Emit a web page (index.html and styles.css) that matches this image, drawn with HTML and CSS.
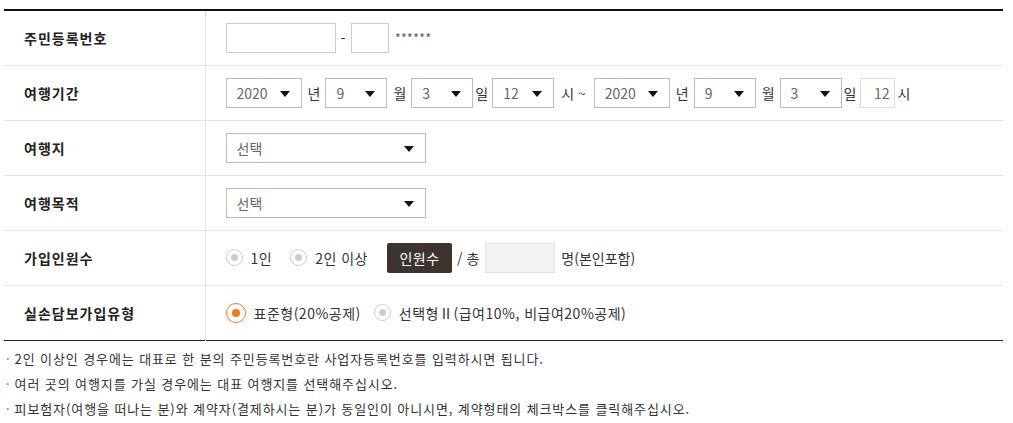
FILE: index.html
```html
<!DOCTYPE html>
<html lang="ko">
<head>
    <meta charset="UTF-8">
    <meta name="viewport" content="width=device-width, initial-scale=1.0">
    <title>여행자보험 가입</title>
    <link rel="stylesheet" href="styles.css">
</head>
<body>
    <div class="wrap">
        <table class="form-table">
            <tr>
                <th>주민등록번호</th>
                <td>
                    <div class="field">
                        <input type="text" class="inp inp-front">
                        <span class="dash">-</span>
                        <input type="text" class="inp inp-back">
                        <span class="mask">******</span>
                    </div>
                </td>
            </tr>
            <tr>
                <th>여행기간</th>
                <td>
                    <div class="field">
                        <div class="sel w76"><select><option>2020</option></select></div>
                        <span class="unit">년</span>
                        <div class="sel w62"><select><option>9</option></select></div>
                        <span class="unit">월</span>
                        <div class="sel w62"><select><option>3</option></select></div>
                        <span class="unit tight">일</span>
                        <div class="sel w62"><select><option>12</option></select></div>
                        <span class="unit wave">시 ~</span>
                        <div class="sel w76"><select><option>2020</option></select></div>
                        <span class="unit">년</span>
                        <div class="sel w62"><select><option>9</option></select></div>
                        <span class="unit">월</span>
                        <div class="sel w62"><select><option>3</option></select></div>
                        <span class="unit tight">일</span>
                        <input type="text" class="inp inp-hour" value="12">
                        <span class="unit last">시</span>
                    </div>
                </td>
            </tr>
            <tr>
                <th>여행지</th>
                <td>
                    <div class="sel w200"><select><option>선택</option></select></div>
                </td>
            </tr>
            <tr>
                <th>여행목적</th>
                <td>
                    <div class="sel w200"><select><option>선택</option></select></div>
                </td>
            </tr>
            <tr>
                <th>가입인원수</th>
                <td>
                    <div class="field">
                        <label class="radio"><span class="dot"></span>1인</label>
                        <label class="radio"><span class="dot"></span>2인 이상</label>
                        <button class="btn-count">인원수</button>
                        <span class="unit slash">/ 총</span>
                        <input type="text" class="inp inp-total">
                        <span class="unit">명(본인포함)</span>
                    </div>
                </td>
            </tr>
            <tr>
                <th>실손담보가입유형</th>
                <td>
                    <div class="field">
                        <label class="radio checked"><span class="dot"></span>표준형(20%공제)</label>
                        <label class="radio"><span class="dot"></span>선택형Ⅱ(급여10%, 비급여20%공제)</label>
                    </div>
                </td>
            </tr>
        </table>

        <ul class="notes">
            <li>2인 이상인 경우에는 대표로 한 분의 주민등록번호란 사업자등록번호를 입력하시면 됩니다.</li>
            <li>여러 곳의 여행지를 가실 경우에는 대표 여행지를 선택해주십시오.</li>
            <li>피보험자(여행을 떠나는 분)와 계약자(결제하시는 분)가 동일인이 아니시면, 계약형태의 체크박스를 클릭해주십시오.</li>
        </ul>
    </div>
</body>
</html>
```

FILE: styles.css
```css
* {
    margin: 0;
    padding: 0;
    box-sizing: border-box;
}

body {
    font-family: "Noto Sans CJK KR", "Noto Sans", sans-serif;
    font-size: 14px;
    letter-spacing: 0.5px;
    color: #333;
    background-color: #fff;
}

.wrap {
    padding: 9px 10px 0 4px;
}

.form-table {
    width: 100%;
    border-collapse: collapse;
    border-top: 2px solid #111;
    border-bottom: 1px solid #222;
}

.form-table tr {
    height: 55px;
}

.form-table tr + tr {
    border-top: 1px solid #e5e5e5;
}

.form-table th {
    width: 201px;
    padding-left: 20px;
    text-align: left;
    font-size: 14px;
    font-weight: bold;
    letter-spacing: 1px;
    color: #222;
    border-right: 1px solid #e5e5e5;
}

.form-table td {
    padding-left: 20px;
}

.field {
    display: flex;
    align-items: center;
}

.inp {
    height: 30px;
    border: 1px solid #ccc;
    font-family: inherit;
    font-size: 14px;
    color: #666;
    outline: none;
}

.inp-front {
    width: 110px;
}

.inp-back {
    width: 38px;
}

.dash {
    margin: 0 5px 0 5px;
}

.mask {
    margin-left: 6px;
    font-size: 12px;
    letter-spacing: 0.5px;
    color: #555;
}

.inp-hour {
    width: 35px;
    border-color: #ddd;
    text-align: right;
    padding-right: 5px;
    letter-spacing: 0;
}

.inp-total {
    width: 70px;
    background-color: #f2f2f2;
    border-color: #e5e5e5;
}

.sel {
    position: relative;
    height: 30px;
    border: 1px solid #bbb;
}

.sel select {
    width: 100%;
    height: 100%;
    border: none;
    background: transparent;
    appearance: none;
    -webkit-appearance: none;
    padding-left: 10px;
    font-family: inherit;
    font-size: 14px;
    color: #666;
    outline: none;
}

.sel::after {
    content: "";
    position: absolute;
    right: 11px;
    top: 12px;
    border-left: 5px solid transparent;
    border-right: 5px solid transparent;
    border-top: 6px solid #111;
    pointer-events: none;
}

.w76 {
    width: 76px;
}

.w62 {
    width: 62px;
}

.w200 {
    width: 200px;
}

.unit {
    margin: 0 5px 0 6px;
    letter-spacing: 0;
    color: #333;
}

.unit.tight {
    margin: 0 4px 0 2px;
}

.unit.wave {
    margin: 0 8px 0 7px;
}

.unit.last {
    margin: 0 0 0 2px;
}

.unit.slash {
    margin: 0 6px 0 5px;
}

.radio {
    display: flex;
    align-items: center;
    margin-right: 18px;
    color: #333;
}

.dot {
    position: relative;
    width: 17px;
    height: 17px;
    border: 1px solid #ccc;
    border-radius: 50%;
    margin-right: 8px;
}

.dot::after {
    content: "";
    position: absolute;
    left: 4px;
    top: 4px;
    width: 7px;
    height: 7px;
    border-radius: 50%;
    background-color: #ccc;
}

.radio.checked {
    margin-right: 13px;
}

.radio.checked .dot {
    width: 20px;
    height: 20px;
    border-color: #f47920;
    margin-right: 8px;
}

.radio.checked .dot::after {
    left: 5px;
    top: 5px;
    width: 8px;
    height: 8px;
    background-color: #f47920;
}

.btn-count {
    height: 30px;
    width: 65px;
    border: none;
    border-radius: 2px;
    background-color: #3d3431;
    color: #fff;
    font-family: inherit;
    font-size: 14px;
    letter-spacing: 0.5px;
    margin-left: 1px;
    cursor: pointer;
}

.notes {
    list-style: none;
    padding: 5px 0 0 2px;
}

.notes li {
    font-size: 13px;
    letter-spacing: 0.9px;
    line-height: 25px;
    color: #333;
}

.notes li::before {
    content: "·";
    margin-right: 4px;
    color: #666;
}
```
